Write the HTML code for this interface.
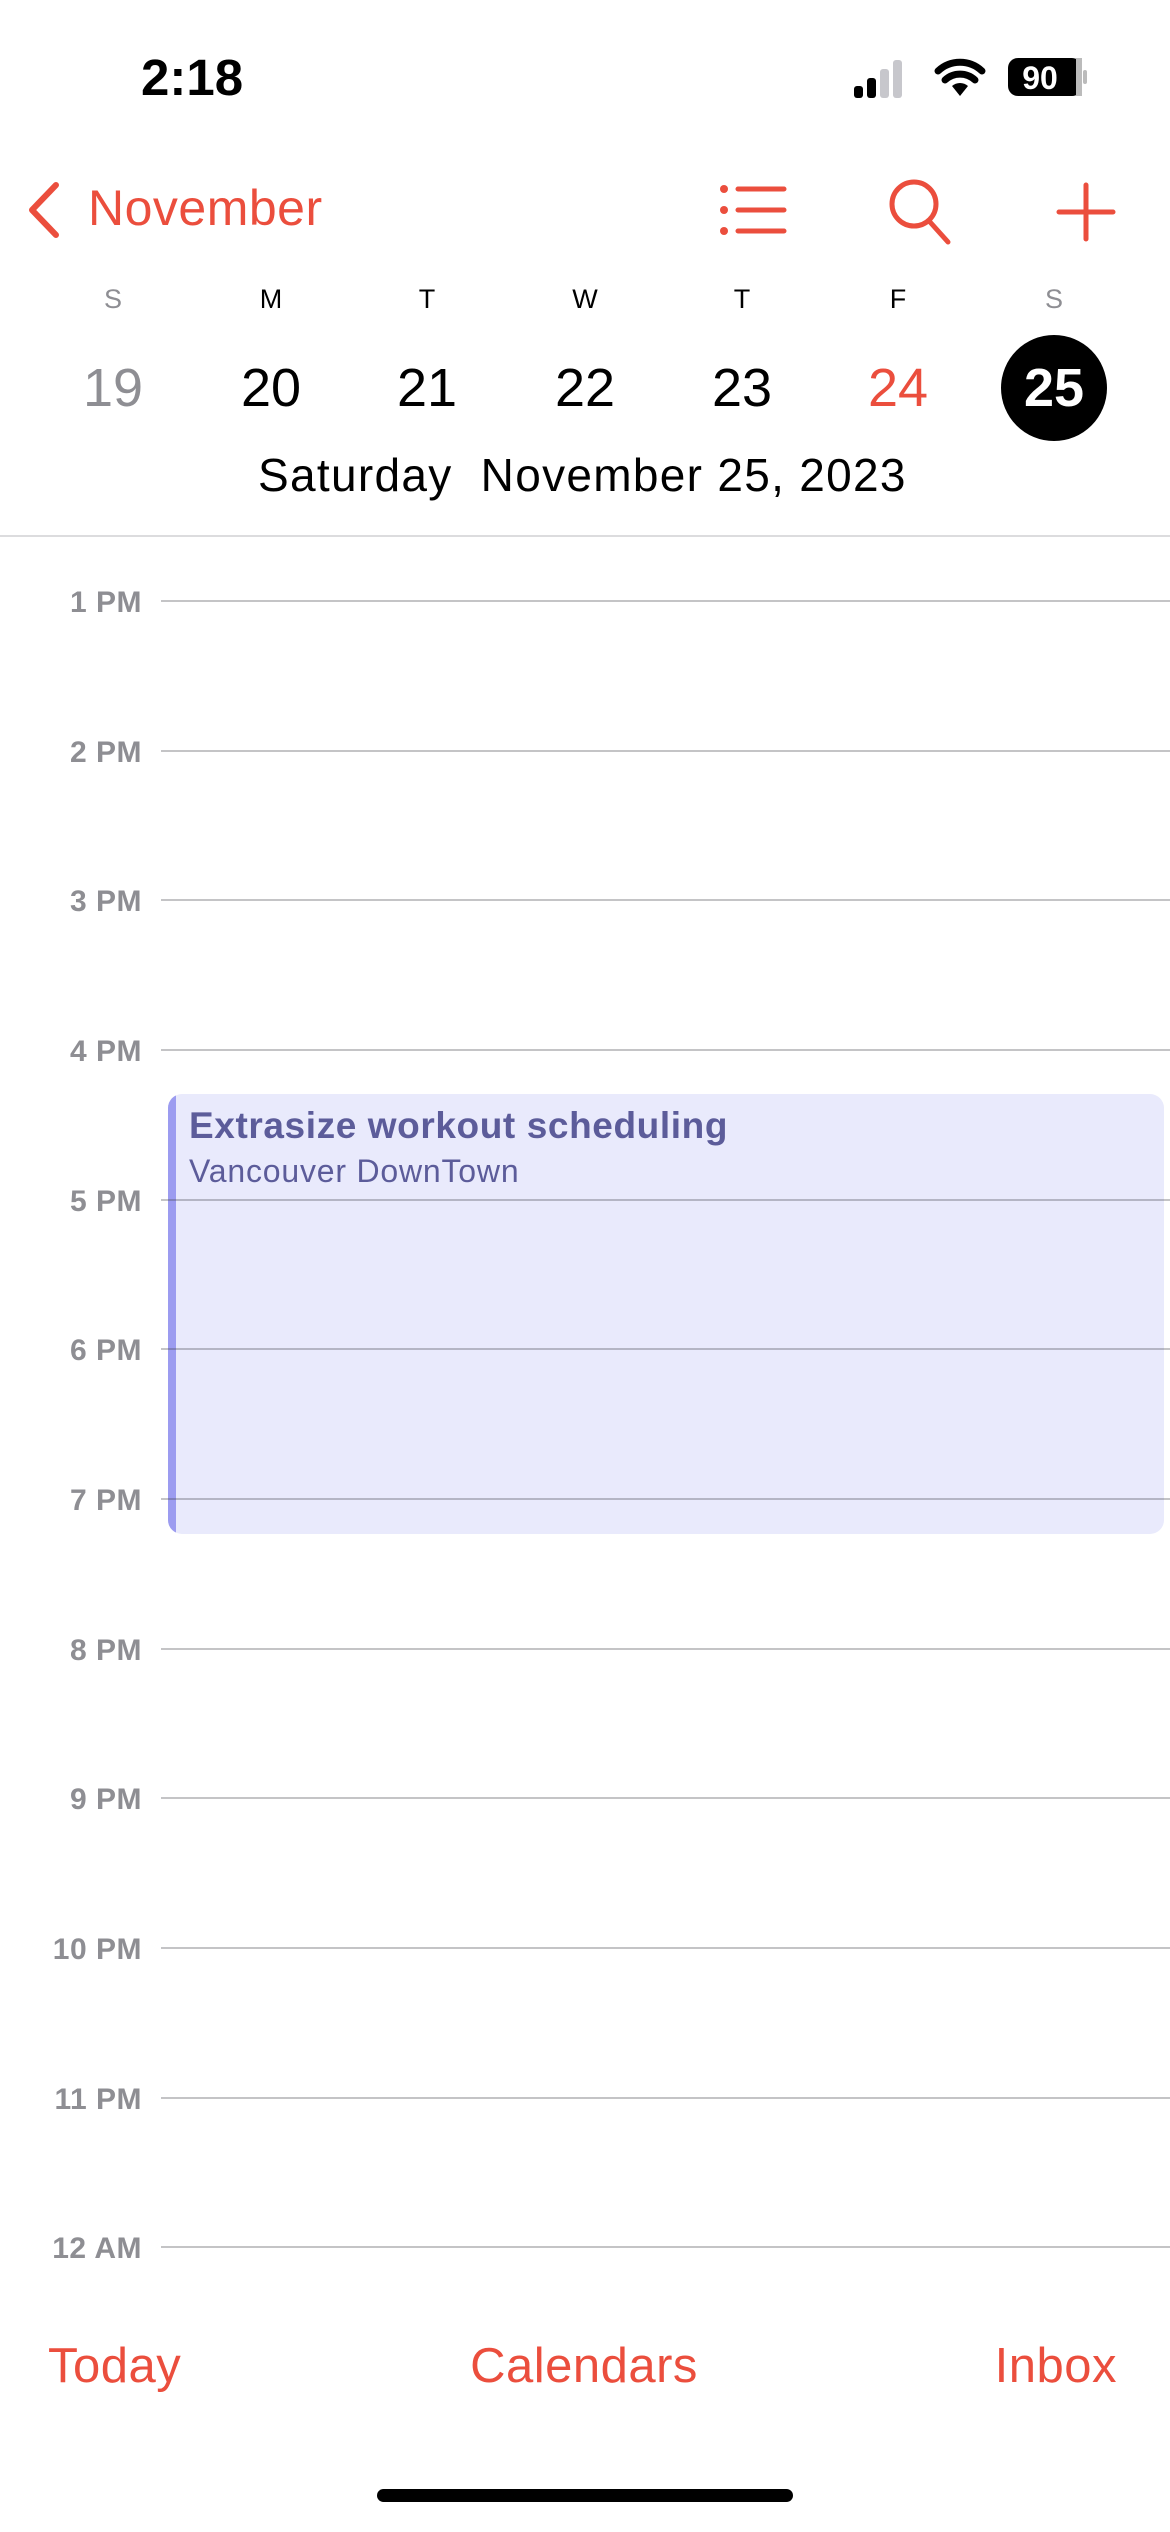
<!DOCTYPE html>
<html><head><meta charset="utf-8"><style>
*{margin:0;padding:0;box-sizing:border-box}
body{width:1170px;height:2532px;background:#fff;position:relative;overflow:hidden;font-family:"Liberation Sans",sans-serif}
.a{position:absolute;white-space:nowrap}
.red{color:#eb4e3d}
.wd{position:absolute;top:282px;width:100px;text-align:center;font-size:27px;line-height:34px}
.dn{position:absolute;top:357px;width:120px;text-align:center;font-size:54px;line-height:62px}
.hl{position:absolute;left:161px;right:0;height:2px;background:rgba(60,60,67,0.3)}
.hr{position:absolute;left:0;width:142px;text-align:right;font-size:30px;font-weight:bold;color:#8e8e93;line-height:34px;letter-spacing:0.5px}
</style></head><body>
<div class="a" style="left:141px;top:48px;font-size:51px;font-weight:bold;line-height:60px">2:18</div>
<svg class="a" style="left:850px;top:58px" width="240" height="44" viewBox="0 0 240 44">
<rect x="4" y="28" width="9" height="12" rx="3" fill="#000"/>
<rect x="17" y="20" width="9" height="20" rx="3" fill="#000"/>
<rect x="30" y="11" width="9" height="29" rx="3" fill="#c7c7cc"/>
<rect x="43" y="2" width="9" height="38" rx="3" fill="#c7c7cc"/>
<g transform="translate(24,0)">
<path d="M86 38 L78 28 A12 12 0 0 1 94 28 Z" fill="#000"/>
<path d="M71 22 A22 22 0 0 1 101 22" stroke="#000" stroke-width="7" fill="none" stroke-linecap="round"/>
<path d="M64 13 A32 32 0 0 1 108 13" stroke="#000" stroke-width="7" fill="none" stroke-linecap="round"/>
</g>
<rect x="158" y="0" width="74" height="38" rx="10" fill="#000"/>
<rect x="226" y="0" width="6" height="38" fill="#bbb"/>
<rect x="233" y="12" width="4" height="14" rx="2" fill="#bbb"/>
<text x="190" y="31" font-family="Liberation Sans" font-weight="bold" font-size="32" fill="#fff" text-anchor="middle">90</text>
</svg>
<svg class="a" style="left:22px;top:180px" width="44" height="60" viewBox="0 0 44 60"><path d="M34 5 L10 30 L34 55" stroke="#eb4e3d" stroke-width="6" fill="none" stroke-linecap="round" stroke-linejoin="round"/></svg>
<div class="a red" style="left:88px;top:178px;font-size:50px;line-height:60px;letter-spacing:0.5px">November</div>
<svg class="a" style="left:718px;top:184px" width="72" height="52" viewBox="0 0 72 52">
<g fill="#eb4e3d"><circle cx="6" cy="5" r="4"/><circle cx="6" cy="26" r="4"/><circle cx="6" cy="47" r="4"/></g>
<g stroke="#eb4e3d" stroke-width="5" stroke-linecap="round"><path d="M20 5H66M20 26H66M20 47H66"/></g></svg>
<svg class="a" style="left:886px;top:176px" width="72" height="72" viewBox="0 0 72 72"><circle cx="28" cy="28" r="22" stroke="#eb4e3d" stroke-width="5" fill="none"/><path d="M44 46 L62 66" stroke="#eb4e3d" stroke-width="5" stroke-linecap="round"/></svg>
<svg class="a" style="left:1056px;top:182px" width="60" height="60" viewBox="0 0 60 60"><path d="M30 3V57M3 30H57" stroke="#eb4e3d" stroke-width="5" stroke-linecap="round"/></svg>
<div class="wd" style="left:63px;color:#8e8e93">S</div>
<div class="wd" style="left:221px">M</div>
<div class="wd" style="left:377px">T</div>
<div class="wd" style="left:535px">W</div>
<div class="wd" style="left:692px">T</div>
<div class="wd" style="left:848px">F</div>
<div class="wd" style="left:1004px;color:#8e8e93">S</div>
<div class="dn" style="left:53px;color:#8e8e93">19</div>
<div class="dn" style="left:211px">20</div>
<div class="dn" style="left:367px">21</div>
<div class="dn" style="left:525px">22</div>
<div class="dn" style="left:682px">23</div>
<div class="dn red" style="left:838px">24</div>
<div class="a" style="left:1001px;top:335px;width:106px;height:106px;border-radius:50%;background:#000"></div>
<div class="dn" style="left:994px;color:#fff;font-weight:bold">25</div>
<div class="a" style="left:258px;top:448px;font-size:46px;line-height:54px;letter-spacing:1.3px">Saturday&nbsp;&nbsp;November 25, 2023</div>
<div class="a" style="left:0;right:0;top:535px;height:2px;background:#dcdcde"></div>

<div class="a" style="left:168px;top:1094px;width:996px;height:440px;background:#e9eafc;border-radius:14px;overflow:hidden">
<div style="position:absolute;left:0;top:0;bottom:0;width:8px;background:#9c9cf0"></div>
<div style="position:absolute;left:21px;top:10px;font-size:37px;font-weight:bold;color:#5c5c9a;line-height:44px;letter-spacing:0.6px">Extrasize workout scheduling</div>
<div style="position:absolute;left:21px;top:57px;font-size:32px;color:#5c5c9a;line-height:40px;letter-spacing:0.8px">Vancouver DownTown</div>
</div>

<div class="hl" style="top:600px"></div><div class="hr" style="top:586px">1 PM</div>
<div class="hl" style="top:750px"></div><div class="hr" style="top:736px">2 PM</div>
<div class="hl" style="top:899px"></div><div class="hr" style="top:885px">3 PM</div>
<div class="hl" style="top:1049px"></div><div class="hr" style="top:1035px">4 PM</div>
<div class="hl" style="top:1199px"></div><div class="hr" style="top:1185px">5 PM</div>
<div class="hl" style="top:1348px"></div><div class="hr" style="top:1334px">6 PM</div>
<div class="hl" style="top:1498px"></div><div class="hr" style="top:1484px">7 PM</div>
<div class="hl" style="top:1648px"></div><div class="hr" style="top:1634px">8 PM</div>
<div class="hl" style="top:1797px"></div><div class="hr" style="top:1783px">9 PM</div>
<div class="hl" style="top:1947px"></div><div class="hr" style="top:1933px">10 PM</div>
<div class="hl" style="top:2097px"></div><div class="hr" style="top:2083px">11 PM</div>
<div class="hl" style="top:2246px"></div><div class="hr" style="top:2232px">12 AM</div>

<div class="a red" style="left:48px;top:2337px;font-size:49px;line-height:58px;letter-spacing:0.5px">Today</div>
<div class="a red" style="left:384px;width:400px;text-align:center;top:2337px;font-size:49px;line-height:58px;letter-spacing:0.5px">Calendars</div>
<div class="a red" style="right:53px;top:2337px;font-size:49px;line-height:58px;letter-spacing:0.5px">Inbox</div>
<div class="a" style="left:377px;top:2489px;width:416px;height:13px;border-radius:7px;background:#000"></div>
</body></html>
